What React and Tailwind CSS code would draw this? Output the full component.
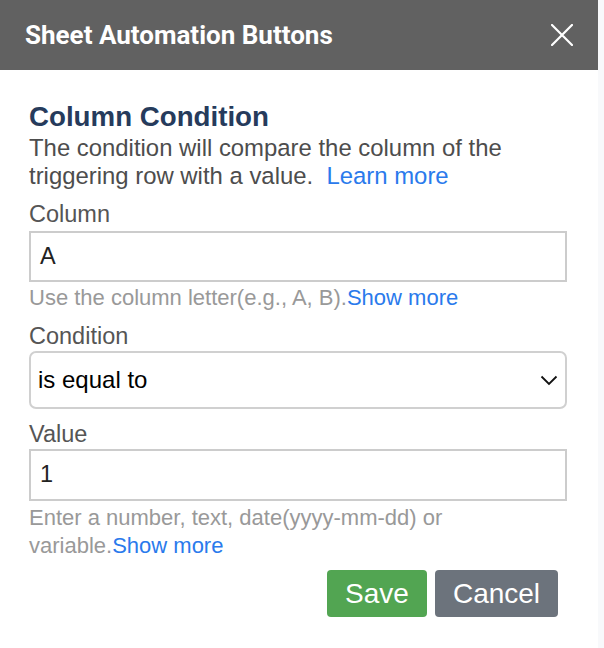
import React from "react";

export default function App() {
  return (
    <div className="w-[604px] h-[648px] bg-[#f8f9fb] flex" style={{ fontFamily: '"Liberation Sans", Arial, sans-serif' }}>
      <div className="w-[598px] h-full bg-white flex flex-col">
        <div className="h-[70px] shrink-0 bg-[#616161] flex items-center justify-between pl-[25px] pr-[25px]">
          <span className="text-white text-[26px] font-bold" style={{ fontFamily: 'Roboto, sans-serif' }}>Sheet Automation Buttons</span>
          <svg width="22" height="22" viewBox="0 0 22 22" className="text-white">
            <path d="M1 1 L21 21 M21 1 L1 21" stroke="currentColor" strokeWidth="2.2" strokeLinecap="square" />
          </svg>
        </div>
        <div className="pl-[29px] pr-[31px] pt-[30px] flex flex-col">
          <h2 className="text-[27.7px] leading-[34px] font-bold text-[#263b5c]">Column Condition</h2>
          <p className="text-[23.9px] leading-[28px] text-[#4d4d4d]">
            The condition will compare the column of the triggering row with a value.{"\u00a0 "}<span className="text-[#2a7aec]">Learn more</span>
          </p>
          <label className="mt-[11px] text-[23.5px] leading-[26px] text-[#555]">Column</label>
          <div className="mt-[4px] h-[51px] border-2 border-[#cccccc] flex items-center pl-[9px] text-[23.5px] text-[#222]">A</div>
          <p className="mt-[2px] text-[22px] leading-[28px] text-[#999]">
            Use the column letter(e.g., A, B).<span className="text-[#2a7aec]">Show more</span>
          </p>
          <label className="mt-[11px] text-[23.5px] leading-[26px] text-[#555]">Condition</label>
          <div className="mt-[2px] h-[58px] border-2 border-[#d0d0d0] rounded-[7px] flex items-center justify-between pl-[7px] pr-[7px] text-[24px] text-black">
            <span>is equal to</span>
            <svg width="18" height="11" viewBox="0 0 18 11">
              <path d="M1.5 1.5 L9 9 L16.5 1.5" fill="none" stroke="#111" strokeWidth="1.8" />
            </svg>
          </div>
          <label className="mt-[12px] text-[23.5px] leading-[26px] text-[#555]">Value</label>
          <div className="mt-[2px] h-[52px] border-2 border-[#cccccc] flex items-center pl-[9px] text-[23.5px] text-[#222]">1</div>
          <p className="mt-[3px] text-[22px] leading-[28px] text-[#999]">
            Enter a number, text, date(yyyy-mm-dd) or variable.<span className="text-[#2a7aec]">Show more</span>
          </p>
          <div className="mt-[10px] flex justify-end gap-[8px] pr-[9px]">
            <button className="w-[100px] h-[47px] rounded-[4px] bg-[#52a552] text-white text-[28px]">Save</button>
            <button className="w-[123px] h-[47px] rounded-[4px] bg-[#6c737c] text-white text-[28px]">Cancel</button>
          </div>
        </div>
      </div>
    </div>
  );
}
